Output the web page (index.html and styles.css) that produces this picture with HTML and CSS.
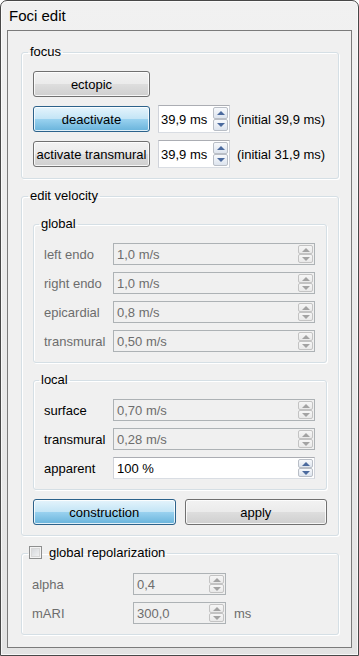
FILE: index.html
```html
<!DOCTYPE html>
<html lang="en">

<head>
    <meta charset="UTF-8">
    <meta name="viewport" content="width=device-width, initial-scale=1.0">
    <title>Foci edit</title>
    <link rel="stylesheet" href="styles.css">
</head>

<body>
    <div class="window">
        <div class="titlebar">Foci edit</div>
        <div class="client">

            <fieldset class="group focus">
                <legend>focus</legend>
                <div class="focus-row">
                    <button class="btn">ectopic</button>
                </div>
                <div class="focus-row">
                    <button class="btn checked">deactivate</button>
                    <div class="spin">
                        <span class="spin-value">39,9 ms</span>
                        <span class="spin-arrows"><span class="arrow up"></span><span class="arrow down"></span></span>
                    </div>
                    <span class="note">(initial 39,9 ms)</span>
                </div>
                <div class="focus-row">
                    <button class="btn">activate transmural</button>
                    <div class="spin">
                        <span class="spin-value">39,9 ms</span>
                        <span class="spin-arrows"><span class="arrow up"></span><span class="arrow down"></span></span>
                    </div>
                    <span class="note">(initial 31,9 ms)</span>
                </div>
            </fieldset>

            <fieldset class="group velocity">
                <legend>edit velocity</legend>

                <fieldset class="group sub">
                    <legend>global</legend>
                    <div class="form-grid">
                        <span class="label disabled">left endo</span>
                        <div class="spin disabled">
                            <span class="spin-value">1,0 m/s</span>
                            <span class="spin-arrows"><span class="arrow up"></span><span class="arrow down"></span></span>
                        </div>
                        <span class="label disabled">right endo</span>
                        <div class="spin disabled">
                            <span class="spin-value">1,0 m/s</span>
                            <span class="spin-arrows"><span class="arrow up"></span><span class="arrow down"></span></span>
                        </div>
                        <span class="label disabled">epicardial</span>
                        <div class="spin disabled">
                            <span class="spin-value">0,8 m/s</span>
                            <span class="spin-arrows"><span class="arrow up"></span><span class="arrow down"></span></span>
                        </div>
                        <span class="label disabled">transmural</span>
                        <div class="spin disabled">
                            <span class="spin-value">0,50 m/s</span>
                            <span class="spin-arrows"><span class="arrow up"></span><span class="arrow down"></span></span>
                        </div>
                    </div>
                </fieldset>

                <fieldset class="group sub local">
                    <legend>local</legend>
                    <div class="form-grid">
                        <span class="label">surface</span>
                        <div class="spin disabled">
                            <span class="spin-value">0,70 m/s</span>
                            <span class="spin-arrows"><span class="arrow up"></span><span class="arrow down"></span></span>
                        </div>
                        <span class="label">transmural</span>
                        <div class="spin disabled">
                            <span class="spin-value">0,28 m/s</span>
                            <span class="spin-arrows"><span class="arrow up"></span><span class="arrow down"></span></span>
                        </div>
                        <span class="label">apparent</span>
                        <div class="spin">
                            <span class="spin-value">100 %</span>
                            <span class="spin-arrows"><span class="arrow up"></span><span class="arrow down"></span></span>
                        </div>
                    </div>
                </fieldset>

                <div class="actions">
                    <button class="btn checked">construction</button>
                    <button class="btn">apply</button>
                </div>
            </fieldset>

            <fieldset class="group repol">
                <legend><span class="check"></span><span class="check-text">global repolarization</span></legend>
                <div class="repol-grid">
                    <span class="label disabled">alpha</span>
                    <div class="spin disabled">
                        <span class="spin-value">0,4</span>
                        <span class="spin-arrows"><span class="arrow up"></span><span class="arrow down"></span></span>
                    </div>
                    <span></span>
                    <span class="label disabled">mARI</span>
                    <div class="spin disabled">
                        <span class="spin-value">300,0</span>
                        <span class="spin-arrows"><span class="arrow up"></span><span class="arrow down"></span></span>
                    </div>
                    <span class="label disabled">ms</span>
                </div>
            </fieldset>

        </div>
    </div>
</body>

</html>
```

FILE: styles.css
```css
* {
    box-sizing: border-box;
}

body {
    margin: 0;
    font-family: "Liberation Sans", Arial, sans-serif;
    font-size: 13px;
    color: #000;
    background: #fff;
}

/* window frame */
.window {
    width: 359px;
    height: 656px;
    border: 1px solid #484848;
    border-radius: 7px 7px 0 0;
    padding: 0 6px 7px;
    background: linear-gradient(#f1f1f1, #e3e3e3);
    box-shadow: inset 0 0 0 1px rgba(255, 255, 255, 0.7);
}

.titlebar {
    height: 29px;
    line-height: 29px;
    padding-left: 2px;
    font-size: 15px;
}

.client {
    height: 618px;
    border: 1px solid #7b7b7b;
    background: #f0f0f0;
    padding: 14px 12px 0 13px;
}

/* group boxes */
.group {
    margin: 0;
    min-width: 0;
    border: 1px solid #d5dfe5;
    border-radius: 3px;
    box-shadow: inset 1px 1px 0 #fff, 1px 1px 0 #fff;
}

.group legend {
    height: 15px;
    line-height: 13px;
    padding: 0 2px 2px;
    margin-left: -5px;
}

.focus {
    padding: 10px 11px 10px 11px;
}

.velocity {
    margin-top: 10px;
    padding: 13px 11px 10px 11px;
}

.sub {
    padding: 11px 11px 10px 10px;
}

.local {
    margin-top: 10px;
}

.repol {
    margin-top: 10px;
    padding: 12px 11px 10px 10px;
}

.repol legend {
    margin-left: -4px;
    padding-left: 1px;
    display: flex;
    align-items: center;
    gap: 7px;
}

/* buttons */
.btn {
    font: inherit;
    color: #000;
    padding: 0;
    height: 26px;
    border: 1px solid #707070;
    border-radius: 3px;
    background: linear-gradient(#f2f2f2 0%, #ebebeb 48%, #dddddd 52%, #cfcfcf 100%);
    box-shadow: inset 0 0 0 1px rgba(255, 255, 255, 0.8);
}

.btn.checked {
    border-color: #2c628b;
    background: linear-gradient(#e5f4fc 0%, #c4e5f6 48%, #98d1ef 52%, #68b3db 100%);
}

.focus-row {
    display: flex;
    align-items: center;
    height: 28px;
}

.focus-row + .focus-row {
    margin-top: 7px;
}

.focus-row .btn {
    width: 117px;
}

.focus-row .spin {
    width: 72px;
    height: 28px;
    margin-left: 8px;
}

.focus-row .spin-value {
    padding-left: 2px;
}

.note {
    margin-left: 7px;
    white-space: nowrap;
}

.actions {
    display: grid;
    grid-template-columns: 1fr 1fr;
    gap: 9px;
    margin-top: 9px;
}

/* spin boxes */
.spin {
    display: flex;
    align-items: stretch;
    height: 22px;
    background: #fff;
    border: 1px solid;
    border-color: #abadb3 #d0d3da #d9dde3 #d0d3da;
}

.spin-value {
    flex: 1;
    display: flex;
    align-items: center;
    padding-left: 3px;
    white-space: nowrap;
}

.spin-arrows {
    display: flex;
    flex-direction: column;
    width: 16px;
    padding: 1px 1px 1px 0;
}

.arrow {
    flex: 1;
    display: flex;
    align-items: center;
    justify-content: center;
    border: 1px solid #b9bec6;
    border-radius: 2px;
    background: linear-gradient(#f7f9fc, #dde4ee);
}

.arrow::before {
    content: "";
    border-left: 4px solid transparent;
    border-right: 4px solid transparent;
}

.arrow.up::before {
    border-bottom: 4px solid #4b6a9e;
}

.arrow.down::before {
    border-top: 4px solid #4b6a9e;
}

.spin.disabled {
    background: #f0f0f0;
    border-color: #adb2b5;
    color: #6d6d6d;
}

.spin.disabled .arrow {
    border-color: #c3c3c3;
    background: linear-gradient(#f6f6f6, #e9e9e9);
}

.spin.disabled .arrow.up::before {
    border-bottom-color: #a3a3a3;
}

.spin.disabled .arrow.down::before {
    border-top-color: #a3a3a3;
}

/* form grids */
.form-grid {
    display: grid;
    grid-template-columns: 69px 1fr;
    grid-auto-rows: 22px;
    row-gap: 7px;
    align-items: center;
}

.repol-grid {
    display: grid;
    grid-template-columns: 101px 93px auto;
    grid-auto-rows: 22px;
    row-gap: 7px;
    align-items: center;
}

.repol-grid .label:last-child {
    margin-left: 8px;
}

.label {
    white-space: nowrap;
}

.label.disabled {
    color: #6d6d6d;
}

/* checkbox */
.check {
    display: inline-block;
    width: 13px;
    height: 13px;
    border: 1px solid #8e8f8f;
    background: linear-gradient(135deg, #cfd2d6, #f7f7f7);
    box-shadow: inset 0 0 0 1px #f4f4f4, inset 0 0 0 2px #d8d8d8;
}
```
